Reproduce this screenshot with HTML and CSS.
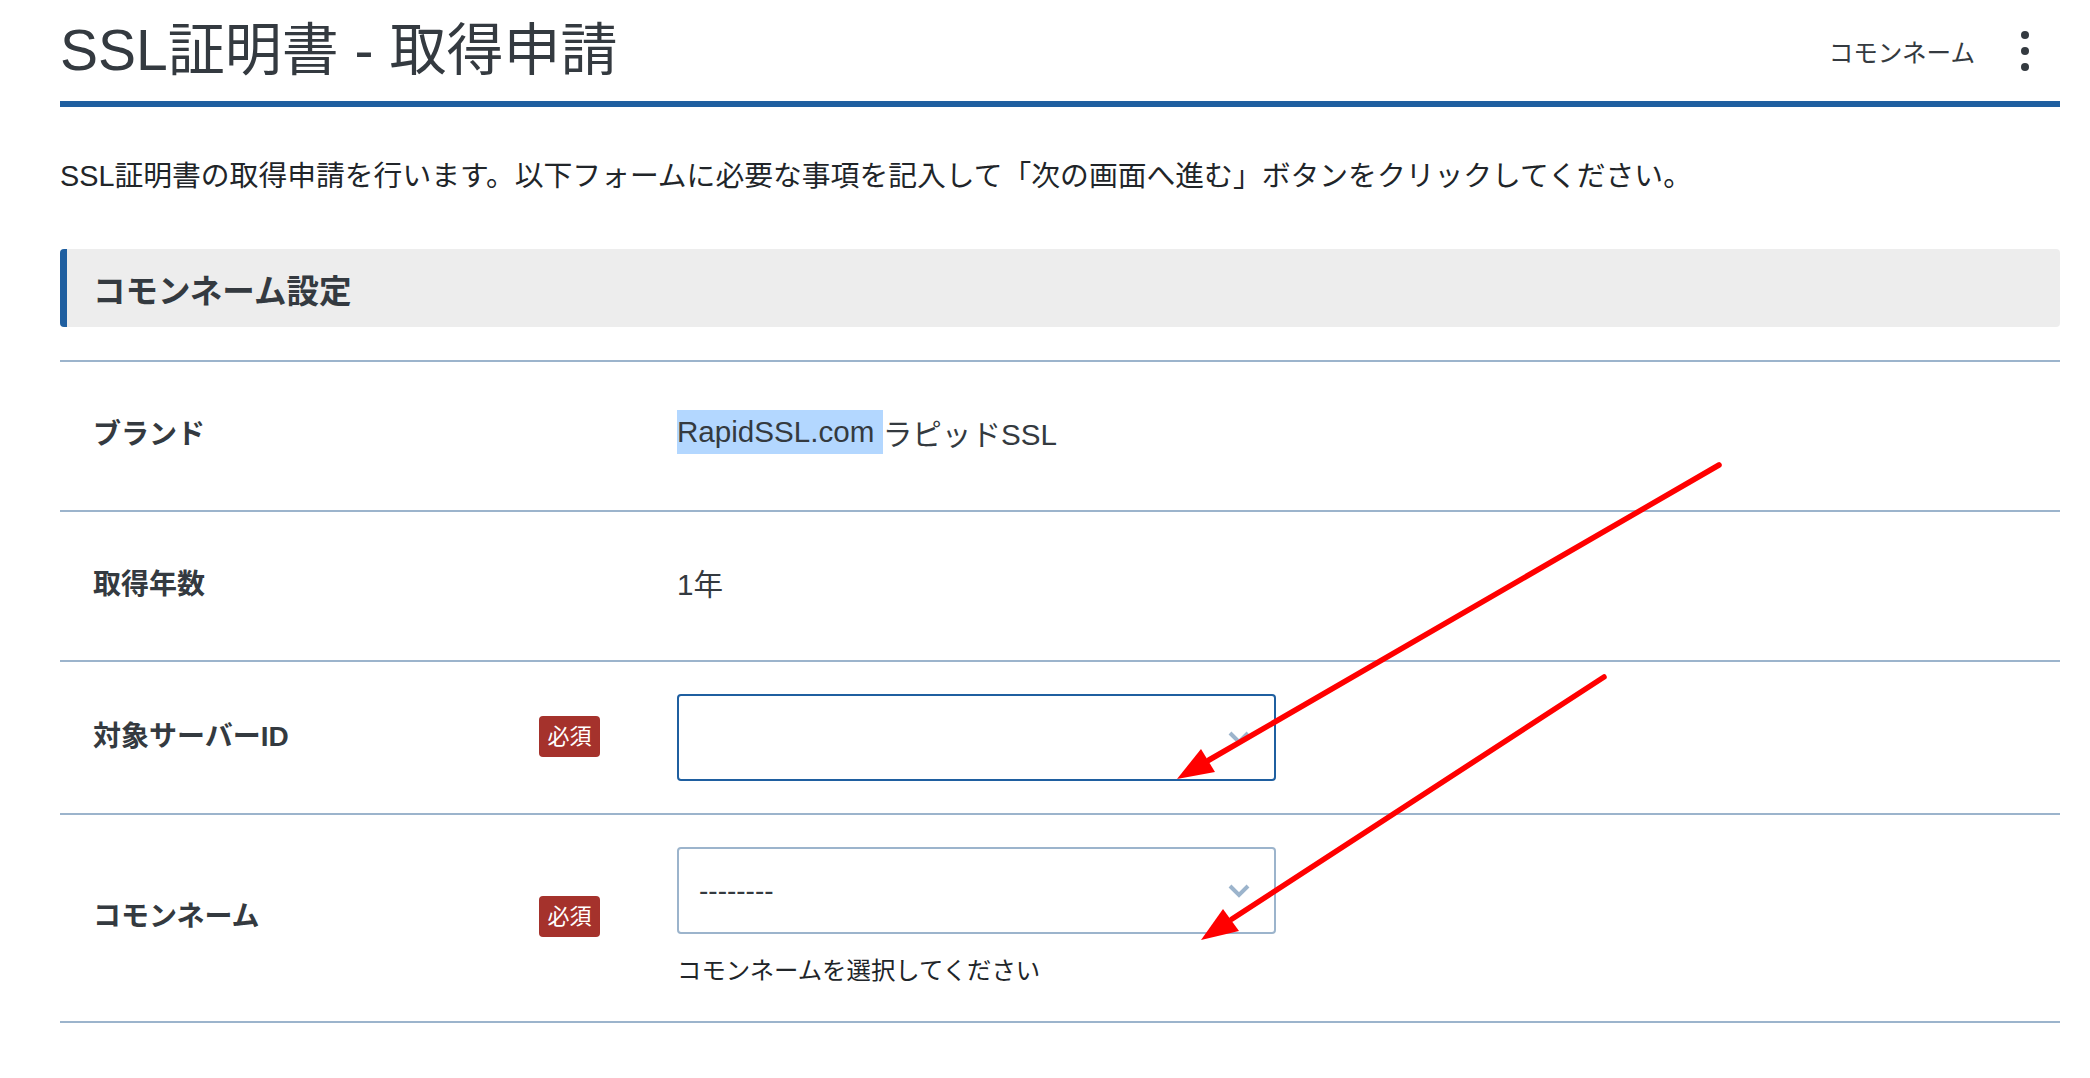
FILE: index.html
```html
<!DOCTYPE html>
<html lang="ja">
<head>
    <meta charset="utf-8">
    <title>SSL証明書 - 取得申請</title>
    <link rel="stylesheet" href="styles.css">
</head>
<body>
    <div class="page">
        <div class="page-head">
            <h1>SSL証明書 - 取得申請</h1>
            <div class="head-tools">
                <span class="crumb">コモンネーム</span>
                <svg class="kebab" width="10" height="42" viewBox="0 0 10 42">
                    <circle cx="5" cy="5" r="4"/>
                    <circle cx="5" cy="21" r="4"/>
                    <circle cx="5" cy="37" r="4"/>
                </svg>
            </div>
        </div>

        <p class="lead">SSL証明書の取得申請を行います。以下フォームに必要な事項を記入して「次の画面へ進む」ボタンをクリックしてください。</p>

        <h2 class="section-title">コモンネーム設定</h2>

        <div class="form-table">
            <div class="form-row">
                <div class="label">ブランド</div>
                <div class="mark"></div>
                <div class="value text"><span class="selected">RapidSSL.com&nbsp;</span>ラピッドSSL</div>
            </div>

            <div class="form-row">
                <div class="label">取得年数</div>
                <div class="mark"></div>
                <div class="value text">1年</div>
            </div>

            <div class="form-row">
                <div class="label">対象サーバーID</div>
                <div class="mark"><span class="badge">必須</span></div>
                <div class="value">
                    <div class="select focus">
                        <span></span>
                        <svg class="chevron" width="22" height="14" viewBox="0 0 22 14"><polyline points="2,2 11,11 20,2"/></svg>
                    </div>
                </div>
            </div>

            <div class="form-row">
                <div class="label">コモンネーム</div>
                <div class="mark"><span class="badge">必須</span></div>
                <div class="value">
                    <div class="select">
                        <span>--------</span>
                        <svg class="chevron" width="22" height="14" viewBox="0 0 22 14"><polyline points="2,2 11,11 20,2"/></svg>
                    </div>
                    <div class="help">コモンネームを選択してください</div>
                </div>
            </div>
        </div>
    </div>

    <!-- 注釈の矢印 -->
    <svg class="annot" width="2090" height="1078" viewBox="0 0 2090 1078">
        <line x1="1719" y1="465" x2="1209" y2="760"/>
        <polygon points="1177,779 1215,772 1201,749"/>
        <line x1="1604" y1="677" x2="1232" y2="919"/>
        <polygon points="1201,940 1239,931 1223,909"/>
    </svg>
</body>
</html>
```

FILE: styles.css
```css
body {
    margin: 0;
    font-family: "Liberation Sans", "Noto Sans CJK JP", sans-serif;
    color: #343a40;
    background: #fff;
}
.page { padding: 0 30px 0 60px; }

.page-head {
    display: flex;
    align-items: center;
    justify-content: space-between;
    height: 101px;
    border-bottom: 6px solid #1f5fa0;
}
.page-head h1 {
    margin: 0;
    font-size: 57px;
    font-weight: normal;
    line-height: 1;
}
.head-tools {
    display: flex;
    align-items: center;
    gap: 45px;
    padding-right: 30px;
}
.crumb { font-size: 24.6px; }
.kebab { display: block; fill: #343a40; }

.lead {
    margin: 48px 0 0;
    font-size: 28.8px;
    line-height: 43px;
    color: #212529;
}

.section-title {
    display: flex;
    align-items: center;
    height: 78px;
    margin: 51px 0 0;
    padding-left: 26px;
    background: #ededed;
    border-left: 7px solid #1f5fa0;
    border-radius: 4px;
    font-size: 32.5px;
    font-weight: bold;
}

.form-table {
    margin-top: 33px;
    border-top: 2px solid #9cb4cc;
}
.form-row {
    display: grid;
    grid-template-columns: 446px 138px 1fr;
    align-items: center;
    padding: 32px 33px;
    border-bottom: 2px solid #9cb4cc;
}
.label {
    padding-bottom: 8px;
    font-size: 28px;
    font-weight: bold;
}
.badge {
    display: inline-block;
    width: 61px;
    height: 41px;
    margin-bottom: 3px;
    line-height: 41px;
    text-align: center;
    vertical-align: middle;
    background: #a5322c;
    color: #fff;
    font-size: 22px;
    border-radius: 4px;
}
.value { font-size: 28.5px; }
.value.text {
    display: flex;
    align-items: center;
    box-sizing: border-box;
    min-height: 84px;
    padding-bottom: 8px;
    font-size: 29.6px;
}
.selected {
    background: #b3d7ff;
    padding: 5px 0;
}

.select {
    display: flex;
    align-items: center;
    justify-content: space-between;
    box-sizing: border-box;
    width: 599px;
    height: 87px;
    padding: 0 24px 0 20px;
    border: 2px solid #9cb4cc;
    border-radius: 4px;
    font-size: 28px;
    color: #343a40;
}
.select.focus { border-color: #1f5fa0; }
.chevron {
    display: block;
    fill: none;
    stroke: #9cb4cc;
    stroke-width: 4;
}
.help {
    margin-top: 19px;
    font-size: 24.4px;
    line-height: 36px;
    color: #212529;
}

.annot {
    position: absolute;
    top: 0;
    left: 0;
    pointer-events: none;
}
.annot line {
    stroke: #ff0000;
    stroke-width: 5.5;
    stroke-linecap: round;
}
.annot polygon { fill: #ff0000; }
```
